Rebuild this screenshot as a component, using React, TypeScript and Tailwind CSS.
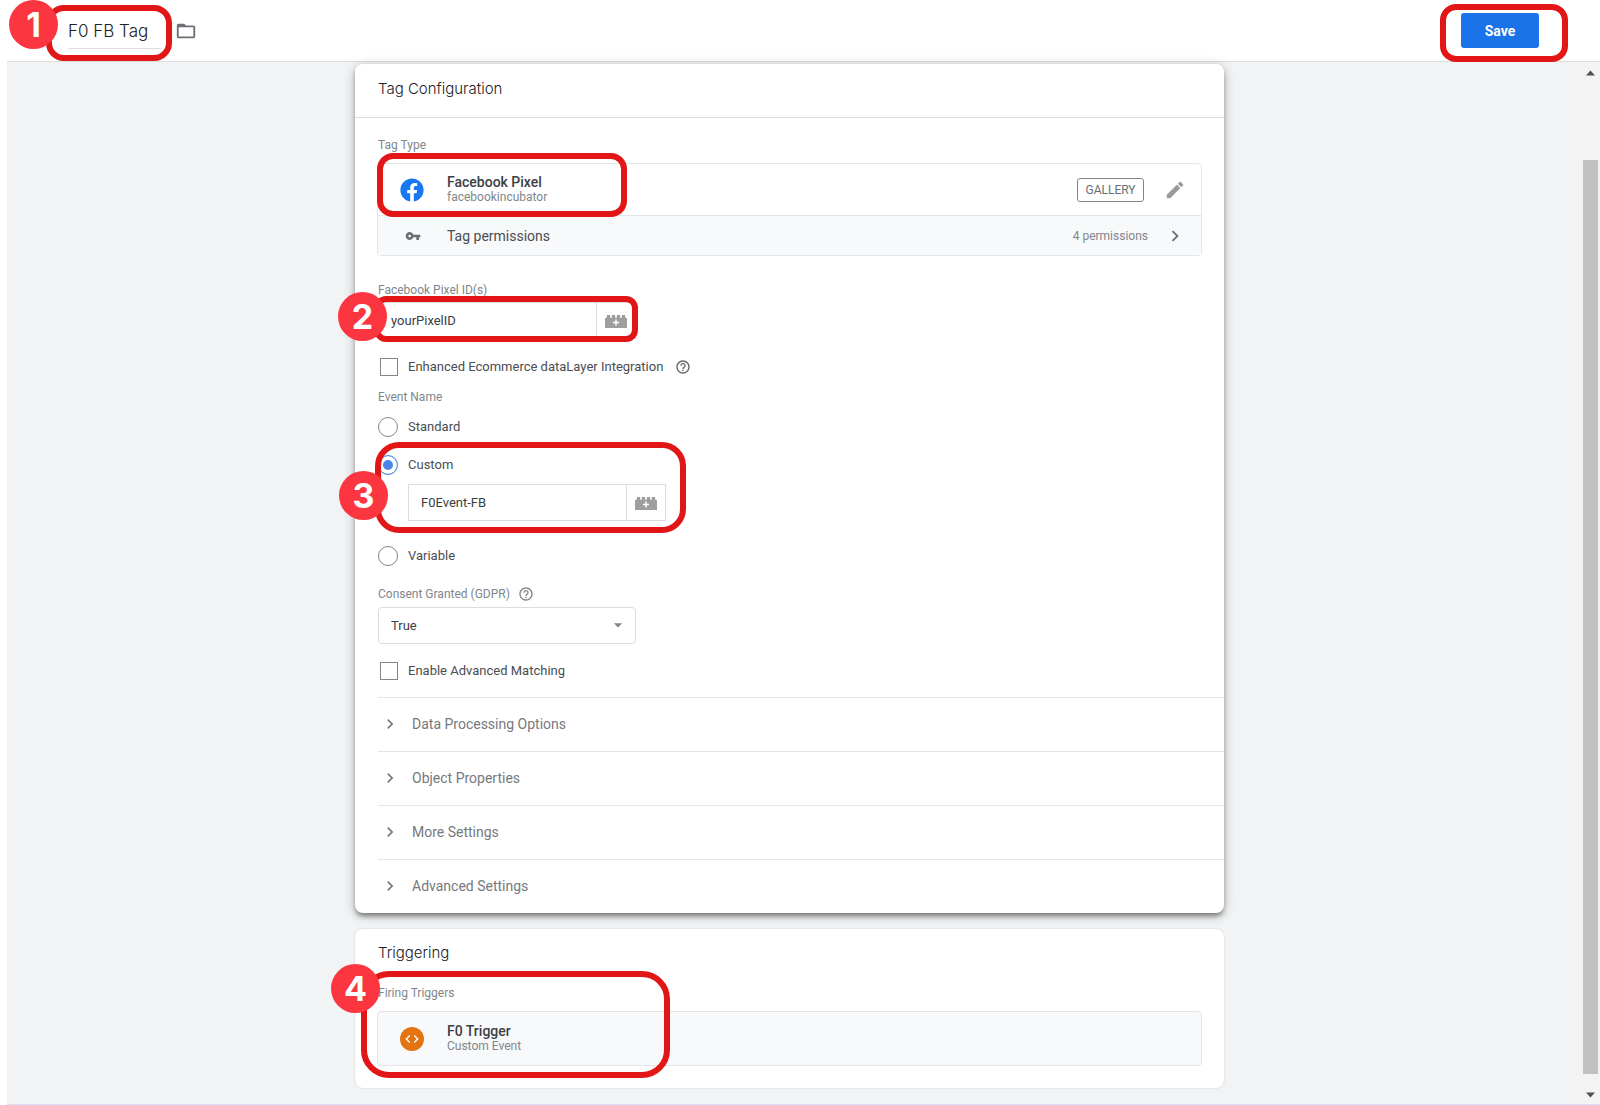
import { FC, ReactNode } from "react";
import { FaFacebook } from "react-icons/fa";
import {
  MdArrowDropDown,
  MdChevronRight,
  MdCode,
  MdEdit,
  MdFolderOpen,
  MdHelpOutline,
  MdVpnKey,
} from "react-icons/md";

const sections = [
  "Data Processing Options",
  "Object Properties",
  "More Settings",
  "Advanced Settings",
];

const Badge: FC<{ className: string; children: ReactNode }> = ({
  className,
  children,
}) => (
  <span
    className={`absolute z-20 flex size-[49px] items-center justify-center rounded-full bg-[#fb3640] font-['Inter',sans-serif] text-[34px] font-bold text-white ${className}`}
  >
    {children}
  </span>
);

const Highlight: FC<{ className: string }> = ({ className }) => (
  <span
    aria-hidden="true"
    className={`pointer-events-none absolute z-10 border-6 border-[#e21616] ${className}`}
  />
);

const BrickIcon: FC = () => (
  <svg width="22" height="14" viewBox="0 0 22 14" aria-hidden="true">
    <path
      fill="#9e9e9e"
      d="M0 14V4h1.500l.5-3h3l.5 3h1l.5-3h3l.5 3h1l.5-3h3l.5 3h1l.5-3h3l.5 3H22v10z"
    />
    <path stroke="#fff" strokeWidth="1.500" d="M11 5.500v6M8 8.500h6" />
  </svg>
);

const VariableInput: FC<{ id: string; value: string; label?: string }> = ({
  id,
  value,
  label,
}) => (
  <div className="flex h-[37px] w-[258px] border border-[#dadce0]">
    <input
      aria-label={label}
      className="min-w-0 flex-1 px-3 text-[13px] text-[#3c4043] outline-none"
      defaultValue={value}
      id={id}
      type="text"
    />
    <button
      aria-label="Insert variable"
      className="flex w-[39px] items-center justify-center border-l border-[#dadce0]"
      type="button"
    >
      <BrickIcon />
    </button>
  </div>
);

const Checkbox: FC<{ label: string; children?: ReactNode }> = ({
  label,
  children,
}) => (
  <div className="flex h-5 items-center">
    <label className="flex items-center gap-[10px] text-[13px] text-[#4a4d51]">
      <input
        className="ml-0.5 size-[18px] appearance-none border border-[#80868b] bg-white"
        type="checkbox"
      />
      {label}
    </label>
    {children}
  </div>
);

const Radio: FC<{ label: string; checked?: boolean }> = ({
  label,
  checked,
}) => (
  <label className="flex h-5 items-center gap-[10px] text-[13px] text-[#4a4d51]">
    <input
      className="size-5 appearance-none rounded-full border border-[#80868b] bg-white checked:border-[#5b8fe8] checked:bg-[#4a86e8] checked:shadow-[inset_0_0_0_4px_#fff]"
      defaultChecked={checked}
      name="event-name"
      type="radio"
    />
    {label}
  </label>
);

const Header: FC = () => (
  <header className="flex h-[61px] items-start justify-between bg-white">
    <div className="relative flex items-center pt-[13px] pl-[68px]">
      <Badge className="left-[9px] top-0">1</Badge>
      <Highlight className="left-[46px] top-[5px] h-[56px] w-[126px] rounded-[18px]" />
      <input
        aria-label="Tag name"
        className="h-9 w-[93px] border-b border-[#ecd9d9] font-['Inter',sans-serif] text-[17px] font-light text-[#202124] outline-none"
        defaultValue="F0 FB Tag"
        type="text"
      />
      <button aria-label="Move to folder" className="ml-[14px]" type="button">
        <MdFolderOpen className="text-[#6b6f73]" size={22} />
      </button>
    </div>
    <div className="relative mr-[61px] pt-[13px]">
      <Highlight className="-left-[21px] top-1 h-[58px] w-[128px] rounded-[16px]" />
      <button
        className="h-[35px] w-[78px] rounded-[3px] bg-[#1a73e8] text-sm font-bold text-white"
        type="button"
      >
        Save
      </button>
    </div>
  </header>
);

const TagConfiguration: FC = () => (
  <section className="relative rounded-lg bg-white shadow-[0_4px_5px_-1px_rgba(0,0,0,0.4),0_2px_12px_rgba(0,0,0,0.25)]">
    <h2 className="flex h-[54px] items-center border-b border-[#dadce0] px-[23px] pb-0.5 font-['Inter',sans-serif] text-[15px] font-light text-[#202124]">
      Tag Configuration
    </h2>
    <div className="pt-[19px] pl-[23px]">
      <h3 className="text-xs leading-4 text-[#80868b]">Tag Type</h3>
      <div className="relative mt-[10px] mr-[22px] -ml-px rounded-sm border border-[#e3e5e8]">
        <Highlight className="-left-px -top-[11px] h-[64px] w-[250px] rounded-[16px]" />
        <div className="flex h-[52px] items-center border-b border-[#e3e5e8] pr-[15px] pl-[22px]">
          <FaFacebook className="text-[#1877f2]" size={24} />
          <div className="ml-[23px] flex-1 pb-0.5">
            <p className="text-sm leading-4 font-medium text-[#3c4043]">
              Facebook Pixel
            </p>
            <p className="text-xs leading-[14px] text-[#80868b]">
              facebookincubator
            </p>
          </div>
          <button
            className="h-6 w-[67px] rounded-[3px] border border-[#80868b] text-xs text-[#6b6f73]"
            type="button"
          >
            GALLERY
          </button>
          <button aria-label="Edit tag type" className="ml-5" type="button">
            <MdEdit className="text-[#9a9a9a]" size={22} />
          </button>
        </div>
        <button
          className="flex h-[39px] w-full items-center bg-[#f8f9fb] pr-[15px] pl-[27px] text-left"
          type="button"
        >
          <MdVpnKey className="text-[#6b6f73]" size={16} />
          <span className="ml-[26px] flex-1 text-sm text-[#4a4d51]">
            Tag permissions
          </span>
          <span className="text-xs text-[#80868b]">4 permissions</span>
          <MdChevronRight className="ml-4 text-[#6b6f73]" size={22} />
        </button>
      </div>

      <label
        className="mt-[26px] block text-xs leading-4 text-[#80868b]"
        htmlFor="pixel-id"
      >
        Facebook Pixel ID(s)
      </label>
      <div className="relative mt-1">
        <Badge className="-left-10 -top-[10px]">2</Badge>
        <Highlight className="-left-1 -top-[6px] h-[46px] w-[264px] rounded-[12px]" />
        <VariableInput id="pixel-id" value="yourPixelID" />
      </div>

      <div className="mt-[18px] mb-3">
        <Checkbox label="Enhanced Ecommerce dataLayer Integration">
          <MdHelpOutline className="ml-3 text-[#5f6368]" size={16} />
        </Checkbox>
      </div>

      <fieldset>
        <legend className="text-xs leading-4 text-[#80868b]">Event Name</legend>
        <div className="mt-3">
          <Radio label="Standard" />
        </div>
        <div className="relative mt-[18px]">
          <Badge className="-left-[39px] top-4">3</Badge>
          <Highlight className="-left-[3px] -top-[13px] h-[91px] w-[311px] rounded-[24px]" />
          <Radio checked label="Custom" />
          <div className="mt-[9px] ml-[30px]">
            <VariableInput
              id="custom-event"
              label="Custom event name"
              value="F0Event-FB"
            />
          </div>
        </div>
        <div className="mt-[25px]">
          <Radio label="Variable" />
        </div>
      </fieldset>

      <div className="mt-5 flex items-center gap-2 text-[#80868b]">
        <label className="text-xs leading-4" htmlFor="consent">
          Consent Granted (GDPR)
        </label>
        <MdHelpOutline size={16} />
      </div>
      <div className="relative mt-[5px] w-[258px]">
        <select
          className="h-[37px] w-full appearance-none rounded-sm border border-[#dadce0] bg-white px-3 text-[13px] text-[#3c4043]"
          id="consent"
        >
          <option>True</option>
        </select>
        <MdArrowDropDown
          className="pointer-events-none absolute top-2 right-2 text-[#80868b]"
          size={20}
        />
      </div>

      <div className="mt-[17px] mb-4">
        <Checkbox label="Enable Advanced Matching" />
      </div>

      {sections.map((section) => (
        <button
          className="flex h-[54px] w-full items-center gap-3 border-t border-[#e3e5e8] pb-0.5 pl-0.5 text-left text-sm text-[#76797d]"
          key={section}
          type="button"
        >
          <MdChevronRight size={20} />
          {section}
        </button>
      ))}
    </div>
  </section>
);

const Triggering: FC = () => (
  <section className="relative mt-4 rounded-lg bg-white px-[22px] pt-3 pb-[22px] shadow-[0_0_2px_rgba(0,0,0,0.18)]">
    <Badge className="-left-6 top-[35px]">4</Badge>
    <Highlight className="left-[6px] top-[42px] h-[107px] w-[309px] rounded-[28px]" />
    <h2 className="pl-px font-['Inter',sans-serif] text-[15px] leading-6 font-light text-[#202124]">
      Triggering
    </h2>
    <h3 className="mt-5 pl-px text-xs leading-4 text-[#80868b]">
      Firing Triggers
    </h3>
    <div className="mt-[10px] flex h-[55px] items-center rounded-sm border border-[#e3e5e8] bg-[#f8f9fb] pl-[22px]">
      <span className="flex size-6 items-center justify-center rounded-full bg-[#e37411] text-white">
        <MdCode size={16} />
      </span>
      <div className="ml-[23px] pb-0.5">
        <p className="text-sm leading-4 font-medium text-[#3c4043]">
          F0 Trigger
        </p>
        <p className="text-xs leading-[14px] text-[#80868b]">Custom Event</p>
      </div>
    </div>
  </section>
);

const Scrollbar: FC = () => (
  <div
    aria-hidden="true"
    className="flex w-[18px] flex-col items-center bg-[#f3f3f3] pt-[7px] pr-px pb-[5px]"
  >
    <svg width="9" height="8" viewBox="0 0 9 8">
      <path fill="#505050" d="M0 6.500 4.500 1.500 9 6.500z" />
    </svg>
    <span className="mt-[83px] mb-[17px] w-[15px] flex-1 bg-[#c1c1c1]" />
    <svg width="9" height="8" viewBox="0 0 9 8">
      <path fill="#505050" d="M0 1.500 4.500 6.500 9 1.500z" />
    </svg>
  </div>
);

const App: FC = () => (
  <div className="flex min-h-screen flex-col bg-white font-['Roboto',sans-serif]">
    <Header />
    <div className="ml-[7px] flex flex-1 border-t border-b border-t-[#dcdee0] border-b-[#d3e0f5] bg-[#f1f3f4]">
      <main className="flex-1 pt-0.5 pr-[10px] pb-4">
        <div className="mx-auto max-w-[869px]">
          <TagConfiguration />
          <Triggering />
        </div>
      </main>
      <Scrollbar />
    </div>
  </div>
);

export default App;
